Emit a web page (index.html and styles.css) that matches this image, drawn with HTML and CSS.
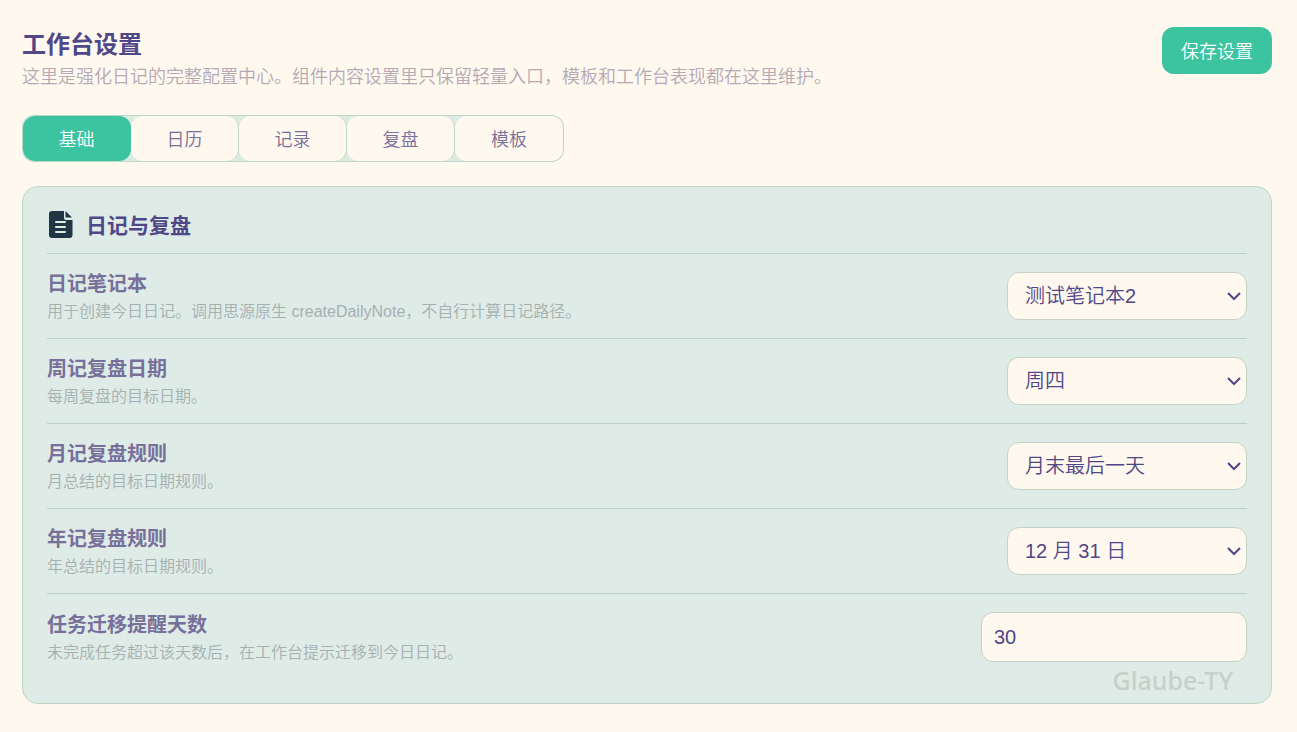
FILE: index.html
```html
<!DOCTYPE html>
<html lang="zh-CN">
<head>
  <meta charset="UTF-8" />
  <meta name="viewport" content="width=device-width, initial-scale=1.0"/>
  <title>工作台设置</title>
  <link rel="stylesheet" href="styles.css">
</head>
<body>
  <div class="page">
    <header class="page-header">
      <div>
        <h1>工作台设置</h1>
        <p class="subtitle">这里是强化日记的完整配置中心。组件内容设置里只保留轻量入口，模板和工作台表现都在这里维护。</p>
      </div>
      <button type="button" class="save-btn">保存设置</button>
    </header>

    <nav class="tabs">
      <button type="button" class="tab active">基础</button>
      <button type="button" class="tab">日历</button>
      <button type="button" class="tab">记录</button>
      <button type="button" class="tab">复盘</button>
      <button type="button" class="tab">模板</button>
    </nav>

    <section class="card">
      <div class="card-title">
        <svg class="card-icon" viewBox="0 0 26 30" aria-hidden="true">
          <path fill="#203645" d="M5 1h12v7a2 2 0 0 0 2 2h6.500v15a3 3 0 0 1-3 3H5a3 3 0 0 1-3-3V4a3 3 0 0 1 3-3z"/>
          <path fill="#203645" d="M18.500 1l6.500 6.500h-6.500z"/>
          <path stroke="#dfece6" stroke-width="2" stroke-linecap="round" d="M9 12h9M9 17h9M9 22h9"/>
        </svg>
        <h2>日记与复盘</h2>
      </div>

      <div class="row">
        <div class="row-text">
          <label for="notebook">日记笔记本</label>
          <p>用于创建今日日记。调用思源原生 createDailyNote，不自行计算日记路径。</p>
        </div>
        <select id="notebook">
          <option>测试笔记本2</option>
        </select>
      </div>

      <div class="row">
        <div class="row-text">
          <label for="weekly">周记复盘日期</label>
          <p>每周复盘的目标日期。</p>
        </div>
        <select id="weekly">
          <option>周四</option>
        </select>
      </div>

      <div class="row">
        <div class="row-text">
          <label for="monthly">月记复盘规则</label>
          <p>月总结的目标日期规则。</p>
        </div>
        <select id="monthly">
          <option>月末最后一天</option>
        </select>
      </div>

      <div class="row">
        <div class="row-text">
          <label for="yearly">年记复盘规则</label>
          <p>年总结的目标日期规则。</p>
        </div>
        <select id="yearly">
          <option>12 月 31 日</option>
        </select>
      </div>

      <div class="row">
        <div class="row-text">
          <label for="days">任务迁移提醒天数</label>
          <p>未完成任务超过该天数后，在工作台提示迁移到今日日记。</p>
        </div>
        <input type="text" inputmode="numeric" id="days" value="30" />
      </div>

      <span class="watermark">Glaube-TY</span>
    </section>
  </div>
</body>
</html>
```
FILE: styles.css
```css
* {
  box-sizing: border-box;
  font-family: "Liberation Sans", "Noto Sans CJK SC", sans-serif;
}

body {
  margin: 0;
  background: #fff8ee;
  color: #4f4788;
}

h1, h2, p {
  margin: 0;
}

.page {
  padding: 27px 25px 27px 22px;
}

.page-header {
  display: flex;
  justify-content: space-between;
  align-items: flex-start;
}

h1 {
  font-size: 24px;
  line-height: 36px;
}

.subtitle {
  font-size: 18px;
  line-height: 28px;
  font-weight: 350;
  color: #b5a9b3;
}

.save-btn {
  padding: 3px 19px 0;
  border: none;
  border-radius: 12px;
  background: #3cc3a0;
  color: #fff;
  font-size: 18px;
  font-weight: 350;
  line-height: 44px;
}

.tabs {
  display: inline-flex;
  margin: 24px 0;
  border: 1px solid #bdd6c6;
  border-radius: 12px;
  background: #dcece2;
  overflow: hidden;
  vertical-align: top;
}

.tab {
  width: 108px;
  padding: 3px 0 0;
  border: none;
  border-right: 1px solid #bdd6c6;
  border-radius: 12px;
  background: #fff8ee;
  color: #77709a;
  font-size: 18px;
  font-weight: 350;
  line-height: 42px;
}

.tab:last-child {
  border-right: none;
}

.tab.active {
  border-color: #3cc3a0;
  background: #3cc3a0;
  color: #fff;
}

.card {
  position: relative;
  padding: 23px 24px;
  border: 1px solid #bdd6c6;
  border-radius: 16px;
  background: #dfebe6;
}

.card-title {
  display: flex;
  align-items: flex-start;
  gap: 13px;
  height: 43px;
}

.card-icon {
  width: 26px;
  height: 30px;
}

h2 {
  font-size: 21px;
  line-height: 32px;
}

.row {
  display: flex;
  justify-content: space-between;
  align-items: center;
  gap: 24px;
  padding: 18px 0;
  border-top: 1px solid #bccfc9;
}

.row-text {
  height: 48px;
  margin-top: -5px;
}

label {
  display: block;
  font-size: 20px;
  line-height: 28px;
  font-weight: bold;
  color: #77709a;
}

.row-text p {
  font-size: 16px;
  line-height: 28px;
  font-weight: 350;
  color: #a5b0b1;
}

select,
input {
  height: 48px;
  margin: 0;
  border: 1px solid #c3d3c5;
  border-radius: 12px;
  background: #fff8ee;
  color: #4f4788;
  font-size: 20px;
  font-weight: 350;
}

select {
  width: 240px;
  padding: 0 32px 0 17px;
  appearance: none;
  background: #fff8ee url("data:image/svg+xml,%3Csvg xmlns='http://www.w3.org/2000/svg' width='14' height='10' fill='none'%3E%3Cpath d='M1 2l6 6 6-6' stroke='%234f4788' stroke-width='2'/%3E%3C/svg%3E") no-repeat right 5px center;
}

input {
  width: 266px;
  height: 50px;
  padding: 0 12px;
}

.watermark {
  position: absolute;
  right: 38px;
  bottom: 6px;
  font-family: "Noto Sans", sans-serif;
  font-size: 25px;
  font-weight: 500;
  color: #c6d0cb;
}
```
